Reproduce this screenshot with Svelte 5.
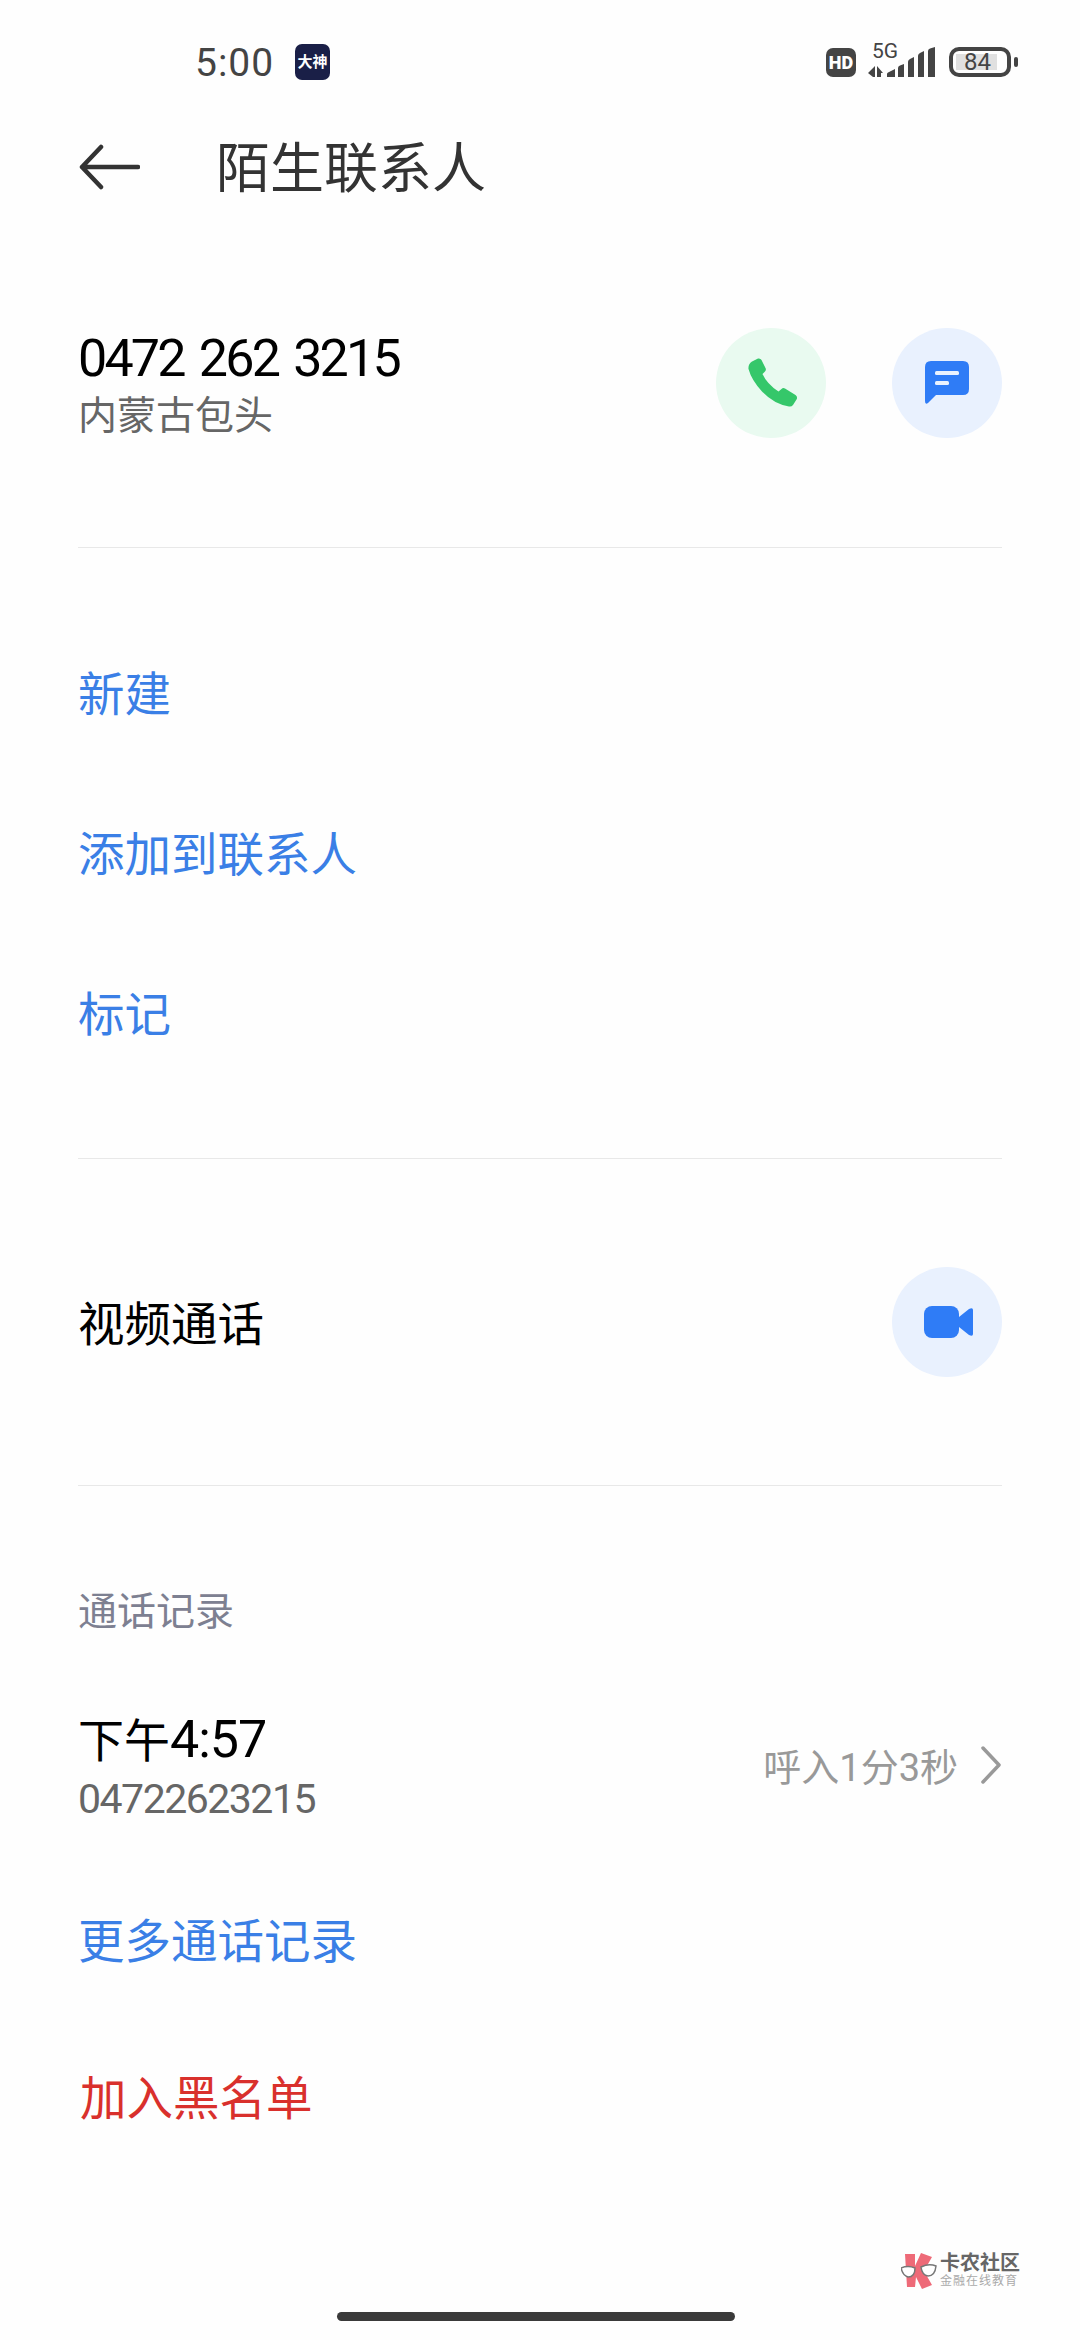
<script>
  const actions = ['新建', '添加到联系人', '标记'];
</script>

<div class="page">
  <div class="status">
    <span class="time">5:00</span>
    <span class="badge">大神</span>
    <span class="spacer"></span>
    <span class="hd">HD</span>
    <div class="signal">
      <span class="five-g">5G</span>
      <svg width="67" height="30" viewBox="0 0 67 30">
        <path d="M0 26L7 19V30H5ZM9 19L15 26H13V30H9Z" fill="#444" />
        <path d="M19 30V27Q19 26 20 25.500L27 22V30ZM30 30V21Q30 19 32 18.500L36 17V30ZM40 30V15Q40 13 42 12L46 10V30ZM50 30V9Q50 7 52 6L56 4V30ZM60 30V4Q60 2 62 1.500L67 0V30Z" fill="#444" />
      </svg>
    </div>
    <div class="battery">
      <div class="level">84</div>
    </div>
    <span class="nub"></span>
  </div>

  <header class="title-bar">
    <svg class="back" width="62" height="46" viewBox="0 0 62 46" fill="none" stroke="#333" stroke-width="4.500" stroke-linecap="round" stroke-linejoin="round">
      <path d="M60 23H4M23 3L4 23l19 20" />
    </svg>
    <h1>陌生联系人</h1>
  </header>

  <section class="contact">
    <div class="info">
      <div class="number">0472 262 3215</div>
      <div class="place">内蒙古包头</div>
    </div>
    <div class="round green">
      <svg class="nudge" width="50" height="50" viewBox="0 0 50 50">
        <path d="M4 3.500L10 0.500Q12.500 0 13.500 2L17.500 10Q18.500 12 17 13.500L14.500 16Q19 26 30.500 33.500L33.500 31Q35 29.500 37 30.500L47.500 37Q50 39 48.500 41.500L45 47Q43.500 49 41 48.500Q26 46 14 33.500Q3.500 22 0.500 11Q0 6 4 3.500Z" fill="#35c76a" />
      </svg>
    </div>
    <div class="round blue message">
      <svg width="44" height="44" viewBox="0 0 44 44">
        <path d="M6 0H38Q44 0 44 6V28Q44 34 38 34H11L3 42Q0 44 0 40V6Q0 0 6 0Z" fill="#2f7cf6" />
        <rect x="10" y="10" width="24" height="4" rx="1.500" fill="#eaf2fe" />
        <rect x="10" y="20" width="14" height="4" rx="1.500" fill="#eaf2fe" />
      </svg>
    </div>
  </section>

  <section class="actions">
    {#each actions as action}
      <div class="link">{action}</div>
    {/each}
  </section>

  <section class="video">
    <span class="video-label">视频通话</span>
    <div class="round blue">
      <svg class="nudge" width="50" height="32" viewBox="0 0 50 32">
        <rect width="35" height="32" rx="8" fill="#2f7cf6" />
        <path d="M35 11L45 3Q49 1 49 4V28Q49 31 45 29L35 21Z" fill="#2f7cf6" />
      </svg>
    </div>
  </section>

  <section class="log">
    <div class="log-title">通话记录</div>
    <div class="call">
      <div>
        <div class="call-time">下午<span class="digits">4:57</span></div>
        <div class="call-number">04722623215</div>
      </div>
      <div class="call-detail">
        <span>呼入1分3秒</span>
        <svg width="22" height="38" viewBox="0 0 22 38" fill="none" stroke="#999" stroke-width="3.500" stroke-linecap="round" stroke-linejoin="round">
          <path d="M3 2l16 17L3 36" />
        </svg>
      </div>
    </div>
    <div class="link more">更多通话记录</div>
    <div class="link danger">加入黑名单</div>
  </section>

  <div class="watermark">
    <svg width="36" height="36" viewBox="0 0 36 36">
      <path d="M4 1H14V13L20 0L31 4L23 18L31 32L21 36L15 24L14 34H6Z" fill="#ee6a78" />
      <path d="M0 15Q7 12 14 15Q14 24 7 24Q2 23 0 15ZM20 14Q28 10 35 13Q34 23 27 23Q21 22 20 14Z" fill="#fff" stroke="#777" stroke-width="1.500" />
    </svg>
    <div class="mark-text">
      <div class="mark-name">卡农社区</div>
      <div class="mark-sub">金融在线教育</div>
    </div>
  </div>

  <div class="home-bar"></div>
</div>

<style>
  :global(body) {
    margin: 0;
    background: #fefefe;
  }
  .page {
    position: relative;
    width: 1080px;
    height: 2340px;
    overflow: hidden;
    font-family: Roboto, "Noto Sans CJK SC", sans-serif;
    color: #000;
  }
  .status {
    display: flex;
    align-items: center;
    height: 40px;
    padding: 42px 0 0 195px;
    color: #444;
  }
  .time {
    font-size: 39px;
    letter-spacing: 1px;
    width: 100px;
    margin-top: 1px;
  }
  .badge {
    width: 35px;
    height: 36px;
    border-radius: 7px;
    background: #1a1f47;
    color: #fff;
    font-size: 15px;
    font-weight: 700;
    line-height: 36px;
    text-align: center;
    white-space: nowrap;
  }
  .spacer {
    flex: 1;
  }
  .hd {
    width: 30px;
    height: 29px;
    border-radius: 7px;
    background: #444;
    color: #fff;
    font-size: 18px;
    font-weight: 900;
    line-height: 29px;
    text-align: center;
  }
  .signal {
    position: relative;
    width: 67px;
    height: 30px;
    margin-left: 12px;
  }
  .five-g {
    position: absolute;
    left: 4px;
    top: -6px;
    font-size: 21px;
    line-height: 20px;
  }
  .signal svg {
    display: block;
  }
  .battery {
    box-sizing: border-box;
    width: 62px;
    height: 30px;
    margin-left: 14px;
    padding: 3px 10px 3px 3px;
    border: 4px solid #444;
    border-radius: 10px;
    display: flex;
  }
  .level {
    flex: 1;
    padding-left: 8px;
    background: #e0e0e0;
    font-size: 24px;
    line-height: 16px;
    white-space: nowrap;
  }
  .nub {
    width: 4px;
    height: 10px;
    margin: 0 62px 0 3px;
    border-radius: 2px;
    background: #444;
  }

  .title-bar {
    display: flex;
    align-items: center;
    height: 62px;
    margin-top: 54px;
    padding-left: 78px;
  }
  .back {
    margin-right: 76px;
  }
  h1 {
    margin: -6px 0 0;
    font-size: 54px;
    font-weight: 400;
    color: #333;
  }

  .contact {
    box-sizing: border-box;
    display: flex;
    align-items: center;
    height: 261px;
    margin: 89px 78px 0;
    padding: 41px 0 109px;
    border-bottom: 1px solid #e8e8e8;
  }
  .info {
    flex: 1;
    margin-top: 7px;
  }
  .number {
    font-size: 52px;
    letter-spacing: -2.800px;
    word-spacing: 5px;
    line-height: 58px;
  }
  .place {
    font-size: 39px;
    line-height: 56px;
    color: #666;
  }
  .round {
    display: flex;
    align-items: center;
    justify-content: center;
    width: 110px;
    height: 110px;
    border-radius: 50%;
  }
  .nudge {
    margin-left: 4px;
  }
  .green {
    background: #e9faf0;
  }
  .blue {
    background: #e9f1fe;
  }
  .message {
    margin-left: 66px;
  }

  .actions {
    box-sizing: border-box;
    height: 611px;
    margin: 0 78px;
    padding-top: 67px;
    border-bottom: 1px solid #e8e8e8;
  }
  .link {
    font-size: 46.500px;
    height: 160px;
    line-height: 160px;
    color: #3a7fe6;
  }

  .video {
    display: flex;
    align-items: center;
    justify-content: space-between;
    height: 326px;
    margin: 0 78px;
    border-bottom: 1px solid #e8e8e8;
    font-size: 46.500px;
  }
  .video-label {
    margin-top: -4px;
  }

  .log {
    margin: 0 78px;
  }
  .log-title {
    margin-top: 98px;
    font-size: 39px;
    line-height: 56px;
    color: #7d8091;
  }
  .call {
    display: flex;
    align-items: center;
    justify-content: space-between;
    margin-top: 70px;
  }
  .call-time {
    font-size: 46px;
    line-height: 60px;
  }
  .digits {
    font-size: 52px;
    letter-spacing: -1px;
  }
  .call-number {
    font-size: 41px;
    letter-spacing: -1.500px;
    line-height: 56px;
    color: #666;
  }
  .call-detail {
    display: flex;
    align-items: center;
    gap: 22px;
    margin-top: -8px;
    font-size: 38px;
    color: #999;
  }
  .more {
    margin-top: 35px;
  }
  .danger {
    margin-top: -3px;
    padding-left: 2px;
    color: #d9302c;
  }

  .watermark {
    position: absolute;
    left: 901px;
    top: 2252px;
    display: flex;
    align-items: center;
    gap: 3px;
  }
  .mark-name {
    font-size: 20px;
    line-height: 22px;
    font-weight: 700;
    color: #666;
  }
  .mark-sub {
    font-size: 12px;
    line-height: 15px;
    letter-spacing: 1px;
    color: #aaa;
  }
  .home-bar {
    position: absolute;
    left: 337px;
    top: 2312px;
    width: 398px;
    height: 9px;
    border-radius: 5px;
    background: #3a3a3a;
  }
</style>
